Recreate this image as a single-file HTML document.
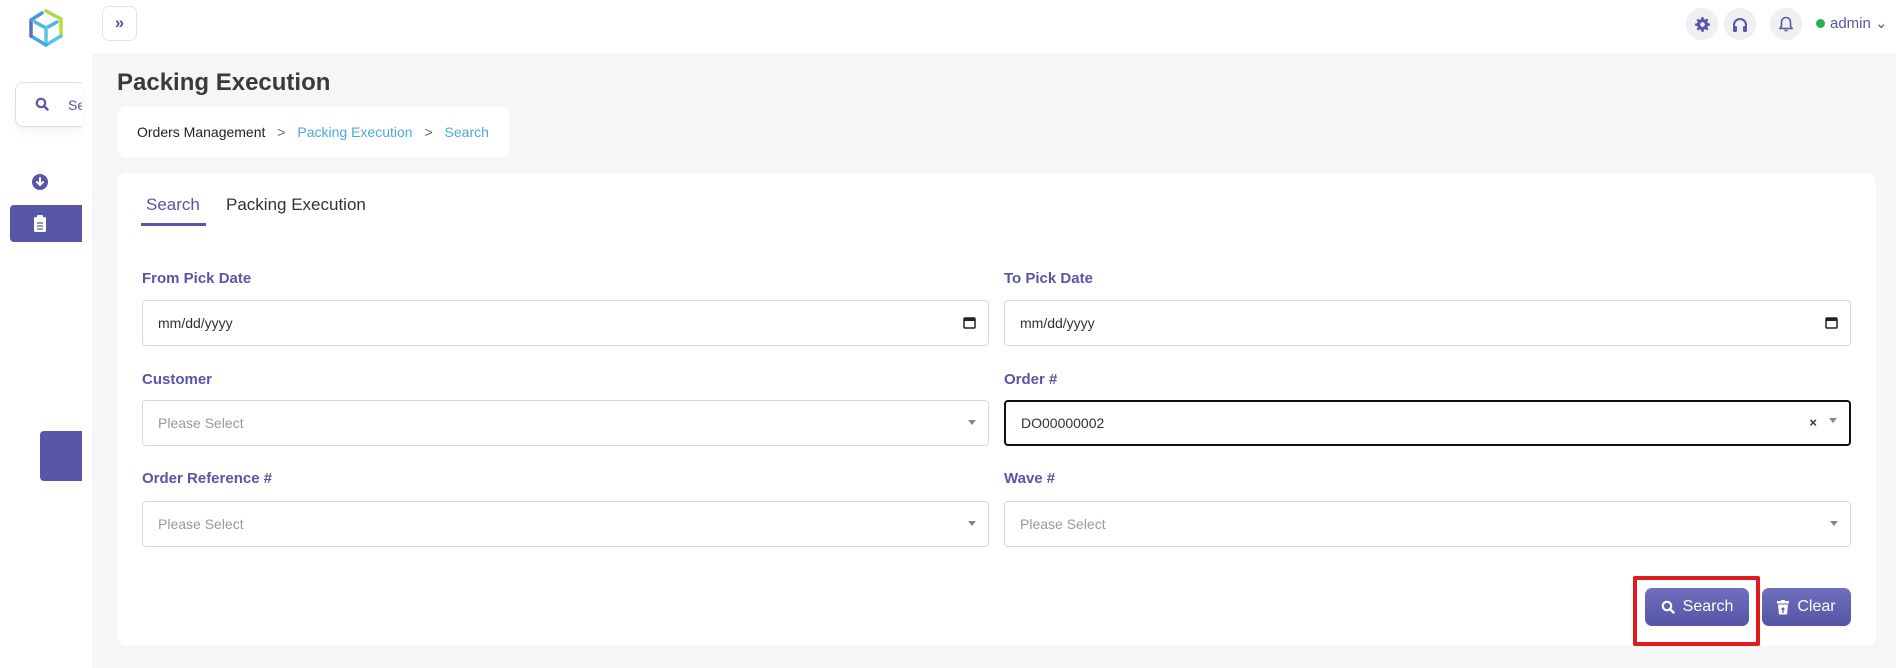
<!DOCTYPE html>
<html><head><meta charset="utf-8"><style>
*{box-sizing:border-box;margin:0;padding:0}
body{width:1896px;height:668px;background:#f5f6f8;font-family:"Liberation Sans",sans-serif;position:relative;overflow:hidden;color:#333}
.a{position:absolute}
.side{left:0;top:0;width:92px;height:668px;background:#fff}
.top{left:92px;top:0;width:1804px;height:54px;background:#fff}
.card{background:#fff;border-radius:10px}
.lbl{font-size:15px;font-weight:bold;color:#5856a6}
.inp{height:46px;border:1px solid #d9d9d9;border-radius:4px;background:#fff;font-size:14px;padding-left:15px;line-height:44px}
.ph{color:#999}
.caret{position:absolute;right:12px;top:19px;width:0;height:0;border-left:4px solid transparent;border-right:4px solid transparent;border-top:5px solid #888}
.circ{width:32px;height:32px;border-radius:50%;background:#f0f0f3;display:flex;align-items:center;justify-content:center}
.btn{height:38px;border-radius:7px;background:linear-gradient(#6f6fbe,#5555a5);color:#fff;font-size:16px;display:flex;align-items:center;justify-content:center;gap:8px}
</style></head><body>
<div class="a side"></div>
<div class="a top"></div>
<svg class="a" style="left:25px;top:8px" width="42" height="42" viewBox="0 0 42 42" fill="none" stroke-width="3.5" stroke-linecap="round">
<path d="M21 3 L36 11" stroke="#a8d84a"/><path d="M36 11 V28" stroke="#b9dc3c"/><path d="M36 28 L21 37" stroke="#58c4e8"/><path d="M21 37 L6 28" stroke="#4aa8e0"/><path d="M6 28 V12" stroke="#5d6bc8"/><path d="M6 12 L17 5" stroke="#4a9ad8"/>
<path d="M10 14 L21 20 L32 14" stroke="#4ab8e0"/><path d="M21 20 V33" stroke="#58c4e8"/></svg>
<div class="a" style="left:15px;top:82px;width:67px;height:45px;border:1px solid #ddd;border-right:none;border-radius:8px 0 0 8px;background:#fff;box-shadow:0 6px 10px rgba(0,0,0,0.04)"></div>
<svg class="a" style="left:35px;top:97px" width="14" height="14" viewBox="0 0 14 14"><circle cx="6" cy="6" r="4.2" stroke="#5856a6" stroke-width="2.2" fill="none"/><path d="M9 9l3.5 3.5" stroke="#5856a6" stroke-width="2.4" stroke-linecap="round"/></svg>
<div class="a" style="left:68px;top:97px;width:14px;overflow:hidden;font-size:14px;color:#5856a6">Se</div>
<svg class="a" style="left:32px;top:174px" width="16" height="16" viewBox="0 0 16 16"><circle cx="8" cy="8" r="8" fill="#5856a6"/><path d="M8 4v7M5 8l3 3 3-3" stroke="#fff" stroke-width="2" fill="none" stroke-linecap="round"/></svg>
<div class="a" style="left:10px;top:205px;width:72px;height:37px;background:#5856a6;border-radius:4px 0 0 4px"></div>
<svg class="a" style="left:33px;top:215px" width="14" height="17" viewBox="0 0 14 17"><rect x="1" y="2" width="12" height="15" rx="1.5" fill="#fff"/><rect x="4" y="0" width="6" height="4" rx="1" fill="#fff"/><path d="M4 8h6M4 11h6M4 14h6" stroke="#5856a6" stroke-width="1.2"/></svg>
<div class="a" style="left:40px;top:431px;width:42px;height:50px;background:#5856a6;border-radius:4px 0 0 4px"></div>
<div class="a" style="left:102px;top:6px;width:35px;height:35px;border:1px solid #e3e3e3;border-radius:7px;background:#fff;color:#5856a6;font-weight:bold;font-size:17px;text-align:center;line-height:31px">»</div>
<div class="a circ" style="left:1686px;top:8px"><svg width="15" height="15" viewBox="0 0 16 16"><path fill="#5856a6" d="M7 0h2l.4 2.2 1.5.7 1.9-1.3 1.4 1.4-1.3 1.9.7 1.5L16 7v2l-2.2.4-.7 1.5 1.3 1.9-1.4 1.4-1.9-1.3-1.5.7L9 16H7l-.4-2.2-1.5-.7-1.9 1.3-1.4-1.4 1.3-1.9-.7-1.5L0 9V7l2.2-.4.7-1.5L1.6 3.2 3 1.8l1.9 1.3 1.5-.7z"/><circle cx="8" cy="8" r="2.5" fill="#f0f0f3"/></svg></div>
<div class="a circ" style="left:1724px;top:8px"><svg width="16" height="15" viewBox="0 0 16 15"><path d="M2 10V8a6 6 0 0 1 12 0v2" stroke="#5856a6" stroke-width="2" fill="none"/><rect x="1" y="9" width="4" height="6" rx="1.5" fill="#5856a6"/><rect x="11" y="9" width="4" height="6" rx="1.5" fill="#5856a6"/></svg></div>
<div class="a circ" style="left:1770px;top:8px"><svg width="14" height="16" viewBox="0 0 14 16"><path d="M7 1.5a4.5 4.5 0 0 0-4.5 4.5v4L1 12.5h12L11.5 10V6A4.5 4.5 0 0 0 7 1.5z" stroke="#5856a6" stroke-width="1.6" fill="none"/><path d="M5.5 14.5h3" stroke="#5856a6" stroke-width="1.6"/></svg></div>
<div class="a" style="left:1816px;top:19px;width:9px;height:9px;border-radius:50%;background:#28b44a"></div>
<div class="a" style="left:1830px;top:14px;font-size:15px;color:#5856a6">admin ⌄</div>
<div class="a" style="left:117px;top:69px;font-size:24px;font-weight:bold;color:#3a3a3a">Packing Execution</div>
<div class="a card" style="left:117px;top:106px;width:392px;height:52px"></div>
<div class="a" style="left:137px;top:124px;font-size:14px;color:#222;white-space:nowrap">Orders Management <span style="color:#666;margin:0 8px">&gt;</span> <span style="color:#4aa8e0">Packing Execution</span> <span style="color:#666;margin:0 8px">&gt;</span> <span style="color:#4aa8e0">Search</span></div>
<div class="a card" style="left:117px;top:173px;width:1759px;height:473px"></div>
<div class="a" style="left:146px;top:195px;font-size:17px;color:#5856a6">Search</div>
<div class="a" style="left:141px;top:223px;width:65px;height:3px;background:#5856a6"></div>
<div class="a" style="left:226px;top:195px;font-size:17px;color:#333">Packing Execution</div>

<div class="a lbl" style="left:142px;top:270px">From Pick Date</div>
<div class="a inp" style="left:142px;top:300px;width:847px">mm/dd/yyyy<svg class="a" style="right:12px;top:15px" width="13" height="13" viewBox="0 0 13 13"><rect x="1" y="2" width="11" height="10" rx="1" stroke="#222" stroke-width="1.5" fill="none"/><rect x="1" y="2" width="11" height="3" fill="#222"/></svg></div>
<div class="a lbl" style="left:1004px;top:270px">To Pick Date</div>
<div class="a inp" style="left:1004px;top:300px;width:847px">mm/dd/yyyy<svg class="a" style="right:12px;top:15px" width="13" height="13" viewBox="0 0 13 13"><rect x="1" y="2" width="11" height="10" rx="1" stroke="#222" stroke-width="1.5" fill="none"/><rect x="1" y="2" width="11" height="3" fill="#222"/></svg></div>

<div class="a lbl" style="left:142px;top:371px">Customer</div>
<div class="a inp ph" style="left:142px;top:400px;width:847px">Please Select<span class="caret"></span></div>
<div class="a lbl" style="left:1004px;top:371px">Order #</div>
<div class="a inp" style="left:1004px;top:400px;width:847px;border:2px solid #111;line-height:42px">DO00000002<span class="a" style="right:32px;top:0;font-size:13px;font-weight:bold">×</span><span class="caret" style="top:16px"></span></div>

<div class="a lbl" style="left:142px;top:470px">Order Reference #</div>
<div class="a inp ph" style="left:142px;top:501px;width:847px">Please Select<span class="caret"></span></div>
<div class="a lbl" style="left:1004px;top:470px">Wave #</div>
<div class="a inp ph" style="left:1004px;top:501px;width:847px">Please Select<span class="caret"></span></div>

<div class="a btn" style="left:1645px;top:588px;width:104px"><svg width="14" height="14" viewBox="0 0 14 14"><circle cx="6" cy="6" r="4.2" stroke="#fff" stroke-width="2.2" fill="none"/><path d="M9 9l3.5 3.5" stroke="#fff" stroke-width="2.4" stroke-linecap="round"/></svg>Search</div>
<div class="a btn" style="left:1762px;top:588px;width:89px"><svg width="12" height="15" viewBox="0 0 12 15"><rect x="0" y="1" width="12" height="2.5" fill="#fff"/><rect x="4" y="0" width="4" height="2" fill="#fff"/><path d="M1 4.5h10l-1 10H2z" fill="#fff"/><path d="M6 13V8M4.5 9.5L6 8l1.5 1.5" stroke="#5856a6" stroke-width="1.2" fill="none"/></svg>Clear</div>
<div class="a" style="left:1633px;top:576px;width:127px;height:70px;border:4px solid #e01b1b;border-radius:2px"></div>
</body></html>
